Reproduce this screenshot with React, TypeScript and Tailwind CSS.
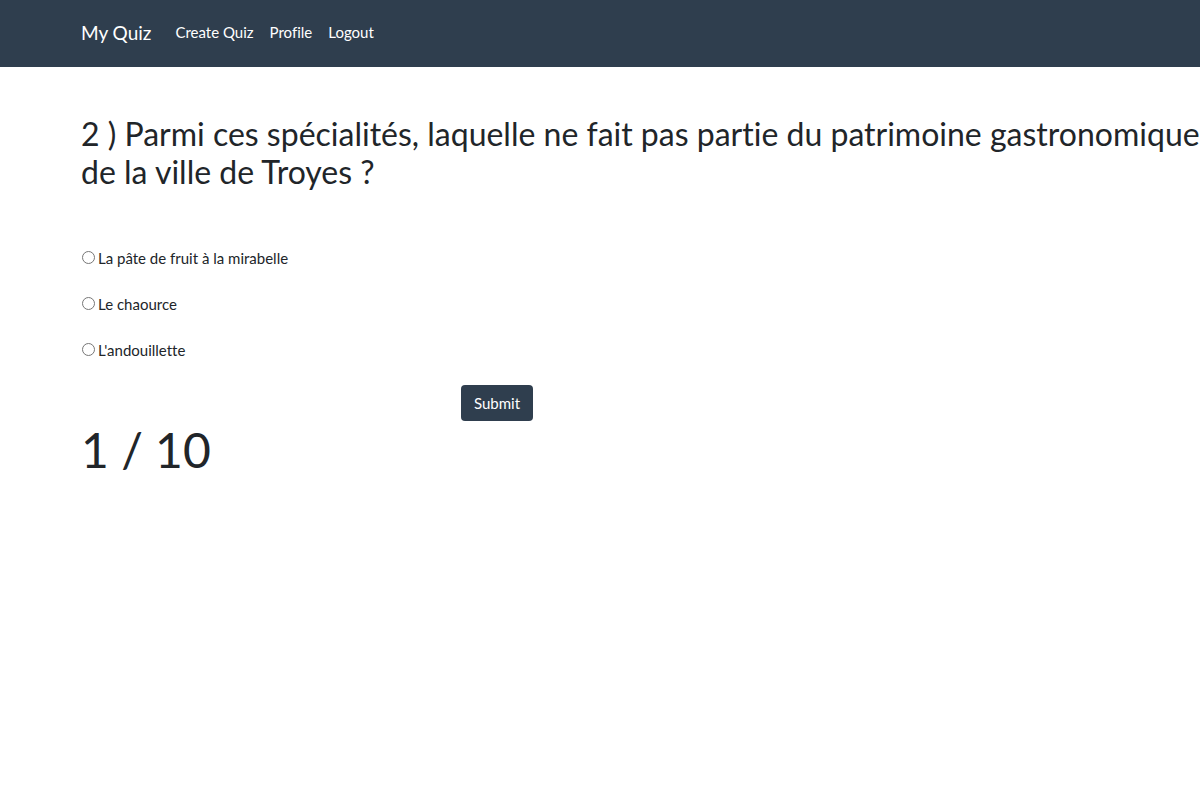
const choices = ["La pâte de fruit à la mirabelle", "Le chaource", "L'andouillette"];

export default function App() {
  return (
    <div className="font-['Lato',sans-serif] text-[15px] leading-[23px] text-[#212529] [font-variant-ligatures:none]">
      <header className="bg-[#2f3e4e] pt-[15px] pr-4 pb-[17px] pl-[81px]">
        <nav className="flex items-center text-white">
          <a href="#" className="mr-4 py-1 text-[19px] leading-[27px]">My Quiz</a>
          <a href="#" className="px-2 py-1">Create Quiz</a>
          <a href="#" className="px-2 py-1">Profile</a>
          <a href="#" className="px-2 py-1">Logout</a>
        </nav>
      </header>
      <main className="pt-12 pl-[81px]">
        <h1 className="text-[32px] leading-[38px]">
          2 ) Parmi ces spécialités, laquelle ne fait pas partie du patrimoine gastronomique de la ville de Troyes ?
        </h1>
        <form className="mt-14" onSubmit={(event) => event.preventDefault()}>
          <div className="flex flex-col gap-[23px]">
            {choices.map((choice) => (
              <label key={choice} className="flex items-center gap-[3px]">
                <input type="radio" name="answer" value={choice} className="mb-0.5 ml-px h-[13px] w-[13px]" />
                {choice}
              </label>
            ))}
          </div>
          <div className="mt-[23px] pl-[380px]">
            <button type="submit" className="block h-9 rounded bg-[#2f3e4e] px-[13px] text-white">Submit</button>
          </div>
        </form>
        <p className="text-[48px] leading-[58px]">1 / 10</p>
      </main>
    </div>
  );
}
